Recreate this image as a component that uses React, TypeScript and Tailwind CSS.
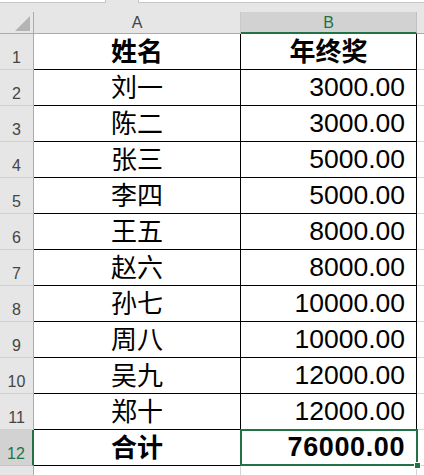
import React from "react";

const rows: [string, string][] = [
  ["姓名", "年终奖"],
  ["刘一", "3000.00"],
  ["陈二", "3000.00"],
  ["张三", "5000.00"],
  ["李四", "5000.00"],
  ["王五", "8000.00"],
  ["赵六", "8000.00"],
  ["孙七", "10000.00"],
  ["周八", "10000.00"],
  ["吴九", "12000.00"],
  ["郑十", "12000.00"],
  ["合计", "76000.00"],
];

export default function App() {
  return (
    <div className="w-[424px] h-[475px] overflow-hidden bg-white text-black font-['Liberation_Sans','Noto_Sans_CJK_SC',sans-serif]">
      {/* top strip (formula bar edges) */}
      <div className="h-[12px] bg-[#e6e6e6] flex items-start">
        <div className="w-[106px] h-[3px] bg-white border-b border-r border-[#c6c6c6]" />
        <div className="w-[32px]" />
        <div className="flex-1 h-[3px] bg-white border-b border-l border-[#c6c6c6]" />
      </div>

      {/* column headers */}
      <div className="flex h-[22px]">
        <div className="relative w-[34px] bg-[#e6e6e6] border-r border-b border-[#ababab]">
          <svg className="absolute right-[3px] bottom-[2px]" width="15" height="15" viewBox="0 0 15 15">
            <polygon points="15,0 15,15 0,15" fill="#b4b4b4" />
          </svg>
        </div>
        <div className="w-[207px] bg-[#e6e6e6] border-r border-b border-[#c8c8c8] border-b-[#ababab] flex items-end justify-center pb-[1px] text-[16px] leading-[18px] text-[#444]">
          A
        </div>
        <div className="w-[176px] bg-[#d2d2d2] border-r border-[#c0c0c0] border-b-2 border-b-[#217346] flex items-end justify-center text-[16px] leading-[18px] text-[#217346]">
          B
        </div>
        <div className="flex-1 bg-[#e6e6e6] border-b border-[#ababab]" />
      </div>

      {/* data rows */}
      {rows.map(([name, val], i) => {
        const n = i + 1;
        const bold = n === 1 || n === 12;
        const selected = n === 12;
        const centerB = n === 1;
        return (
          <div key={n} className="flex h-[36px]">
            <div
              className={
                selected
                  ? "w-[34px] bg-[#d2d2d2] border-b border-[#c6c6c6] border-r-2 border-r-[#217346] flex items-end justify-center pb-[2px] text-[16px] leading-[18px] text-[#217346]"
                  : "w-[34px] bg-[#e6e6e6] border-b border-[#d0d0d0] border-r border-r-[#ababab] flex items-end justify-center pb-[2px] text-[16px] leading-[18px] text-[#444]"
              }
            >
              {n}
            </div>
            <div
              className={
                "w-[207px] border-r border-b border-black flex items-center justify-center text-[26px] leading-none " +
                (bold ? "font-bold" : "")
              }
            >
              {name}
            </div>
            <div
              className={
                "relative w-[176px] border-r border-b border-black flex items-center leading-none " +
                (centerB ? "justify-center text-[26px] " : "justify-end pr-[11px] ") +
                (selected ? "text-[27px] tracking-[0.6px] " : centerB ? "" : "text-[26.5px] ") +
                (bold ? "font-bold" : "")
              }
            >
              {val}
              {selected && (
                <>
                  <div className="absolute -top-[1px] -left-[1px] -right-[2px] -bottom-[1px] border-2 border-[#217346]" />
                  <div className="absolute -right-[5px] -bottom-[4px] w-[7px] h-[7px] bg-[#217346] border border-white" />
                </>
              )}
            </div>
            <div className="flex-1 border-b border-[#d4d4d4]" />
          </div>
        );
      })}

      {/* row 13 partial */}
      <div className="flex h-[9px]">
        <div className="w-[34px] bg-[#e6e6e6] border-r border-[#ababab]" />
        <div className="w-[207px] border-r border-[#d4d4d4]" />
        <div className="w-[176px] border-r border-[#d4d4d4]" />
        <div className="flex-1" />
      </div>
    </div>
  );
}
